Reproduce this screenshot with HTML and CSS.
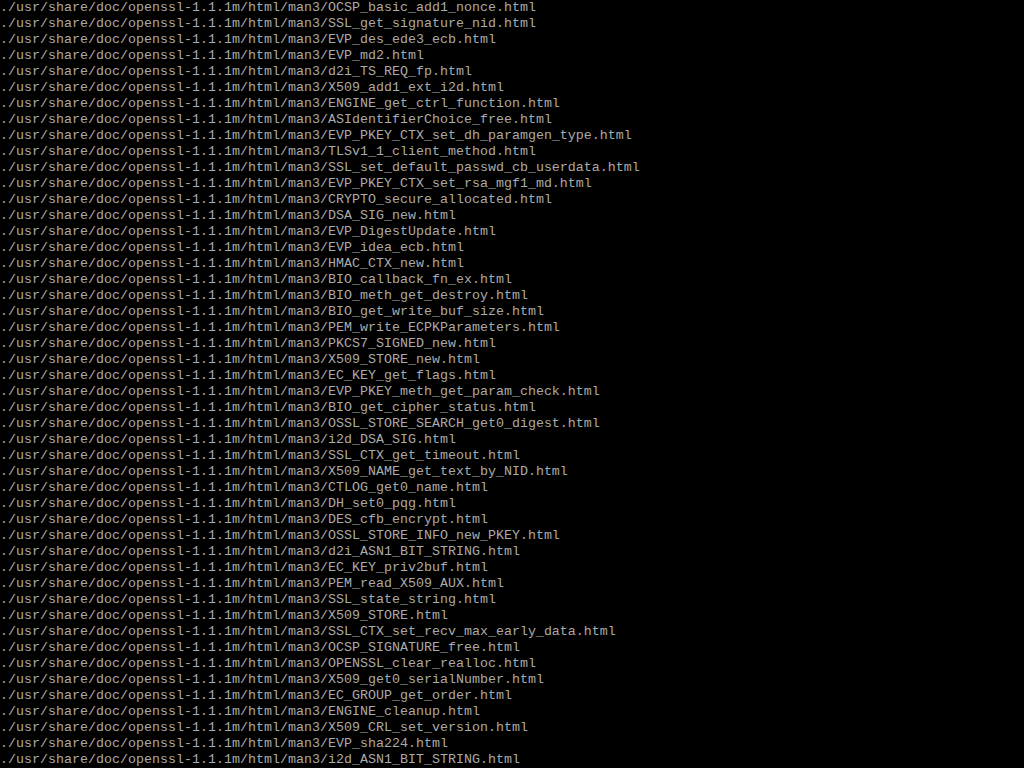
FILE: index.html
```html
<!DOCTYPE html>
<html lang="en">
<head>
    <meta charset="UTF-8">
    <title>tty1</title>
    <link rel="stylesheet" href="styles.css">
</head>
<body>
<pre class="console">./usr/share/doc/openssl-1.1.1m/html/man3/OCSP_basic_add1_nonce.html
./usr/share/doc/openssl-1.1.1m/html/man3/SSL_get_signature_nid.html
./usr/share/doc/openssl-1.1.1m/html/man3/EVP_des_ede3_ecb.html
./usr/share/doc/openssl-1.1.1m/html/man3/EVP_md2.html
./usr/share/doc/openssl-1.1.1m/html/man3/d2i_TS_REQ_fp.html
./usr/share/doc/openssl-1.1.1m/html/man3/X509_add1_ext_i2d.html
./usr/share/doc/openssl-1.1.1m/html/man3/ENGINE_get_ctrl_function.html
./usr/share/doc/openssl-1.1.1m/html/man3/ASIdentifierChoice_free.html
./usr/share/doc/openssl-1.1.1m/html/man3/EVP_PKEY_CTX_set_dh_paramgen_type.html
./usr/share/doc/openssl-1.1.1m/html/man3/TLSv1_1_client_method.html
./usr/share/doc/openssl-1.1.1m/html/man3/SSL_set_default_passwd_cb_userdata.html
./usr/share/doc/openssl-1.1.1m/html/man3/EVP_PKEY_CTX_set_rsa_mgf1_md.html
./usr/share/doc/openssl-1.1.1m/html/man3/CRYPTO_secure_allocated.html
./usr/share/doc/openssl-1.1.1m/html/man3/DSA_SIG_new.html
./usr/share/doc/openssl-1.1.1m/html/man3/EVP_DigestUpdate.html
./usr/share/doc/openssl-1.1.1m/html/man3/EVP_idea_ecb.html
./usr/share/doc/openssl-1.1.1m/html/man3/HMAC_CTX_new.html
./usr/share/doc/openssl-1.1.1m/html/man3/BIO_callback_fn_ex.html
./usr/share/doc/openssl-1.1.1m/html/man3/BIO_meth_get_destroy.html
./usr/share/doc/openssl-1.1.1m/html/man3/BIO_get_write_buf_size.html
./usr/share/doc/openssl-1.1.1m/html/man3/PEM_write_ECPKParameters.html
./usr/share/doc/openssl-1.1.1m/html/man3/PKCS7_SIGNED_new.html
./usr/share/doc/openssl-1.1.1m/html/man3/X509_STORE_new.html
./usr/share/doc/openssl-1.1.1m/html/man3/EC_KEY_get_flags.html
./usr/share/doc/openssl-1.1.1m/html/man3/EVP_PKEY_meth_get_param_check.html
./usr/share/doc/openssl-1.1.1m/html/man3/BIO_get_cipher_status.html
./usr/share/doc/openssl-1.1.1m/html/man3/OSSL_STORE_SEARCH_get0_digest.html
./usr/share/doc/openssl-1.1.1m/html/man3/i2d_DSA_SIG.html
./usr/share/doc/openssl-1.1.1m/html/man3/SSL_CTX_get_timeout.html
./usr/share/doc/openssl-1.1.1m/html/man3/X509_NAME_get_text_by_NID.html
./usr/share/doc/openssl-1.1.1m/html/man3/CTLOG_get0_name.html
./usr/share/doc/openssl-1.1.1m/html/man3/DH_set0_pqg.html
./usr/share/doc/openssl-1.1.1m/html/man3/DES_cfb_encrypt.html
./usr/share/doc/openssl-1.1.1m/html/man3/OSSL_STORE_INFO_new_PKEY.html
./usr/share/doc/openssl-1.1.1m/html/man3/d2i_ASN1_BIT_STRING.html
./usr/share/doc/openssl-1.1.1m/html/man3/EC_KEY_priv2buf.html
./usr/share/doc/openssl-1.1.1m/html/man3/PEM_read_X509_AUX.html
./usr/share/doc/openssl-1.1.1m/html/man3/SSL_state_string.html
./usr/share/doc/openssl-1.1.1m/html/man3/X509_STORE.html
./usr/share/doc/openssl-1.1.1m/html/man3/SSL_CTX_set_recv_max_early_data.html
./usr/share/doc/openssl-1.1.1m/html/man3/OCSP_SIGNATURE_free.html
./usr/share/doc/openssl-1.1.1m/html/man3/OPENSSL_clear_realloc.html
./usr/share/doc/openssl-1.1.1m/html/man3/X509_get0_serialNumber.html
./usr/share/doc/openssl-1.1.1m/html/man3/EC_GROUP_get_order.html
./usr/share/doc/openssl-1.1.1m/html/man3/ENGINE_cleanup.html
./usr/share/doc/openssl-1.1.1m/html/man3/X509_CRL_set_version.html
./usr/share/doc/openssl-1.1.1m/html/man3/EVP_sha224.html
./usr/share/doc/openssl-1.1.1m/html/man3/i2d_ASN1_BIT_STRING.html</pre>
</body>
</html>
```

FILE: styles.css
```css
html, body {
    margin: 0;
    padding: 0;
    background: #000;
    overflow: hidden;
}
.console {
    margin: 0;
    padding: 0;
    width: 1024px;
    height: 768px;
    color: #aaaaaa;
    font-family: "Liberation Mono", "DejaVu Sans Mono", monospace;
    font-size: 13.3333px;
    line-height: 16px;
    white-space: pre;
}
```
